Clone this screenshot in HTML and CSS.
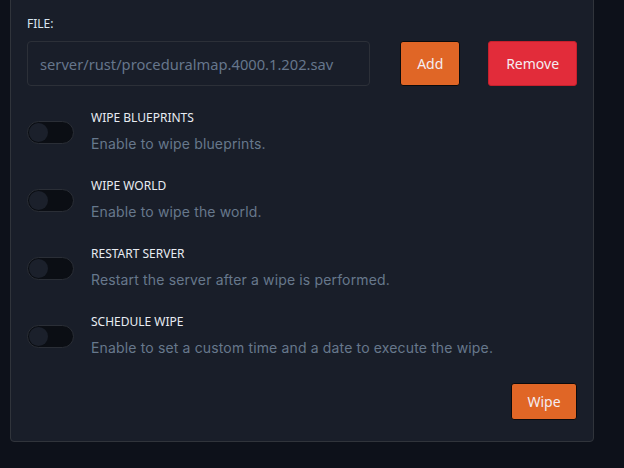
FILE: index.html
```html
<!DOCTYPE html>
<html>
<head>
<meta charset="utf-8">
<link rel="stylesheet" href="styles.css">
</head>
<body>
<div class="card">
  <div class="label">FILE:</div>
  <div class="file-row">
    <div class="input">server/rust/proceduralmap.4000.1.202.sav</div>
    <button class="btn btn-orange btn-add">Add</button>
    <button class="btn btn-red btn-remove">Remove</button>
  </div>
  <div class="options">
    <div class="option">
      <span class="toggle"><span class="knob"></span></span>
      <div class="text">
        <div class="title">WIPE BLUEPRINTS</div>
        <div class="desc">Enable to wipe blueprints.</div>
      </div>
    </div>
    <div class="option">
      <span class="toggle"><span class="knob"></span></span>
      <div class="text">
        <div class="title">WIPE WORLD</div>
        <div class="desc">Enable to wipe the world.</div>
      </div>
    </div>
    <div class="option">
      <span class="toggle"><span class="knob"></span></span>
      <div class="text">
        <div class="title">RESTART SERVER</div>
        <div class="desc">Restart the server after a wipe is performed.</div>
      </div>
    </div>
    <div class="option">
      <span class="toggle"><span class="knob"></span></span>
      <div class="text">
        <div class="title">SCHEDULE WIPE</div>
        <div class="desc">Enable to set a custom time and a date to execute the wipe.</div>
      </div>
    </div>
  </div>
  <div class="actions">
    <button class="btn btn-orange btn-wipe">Wipe</button>
  </div>
</div>
</body>
</html>
```
FILE: styles.css
```css
html, body {
  margin: 0;
  padding: 0;
  background: #0d111a;
  height: 100%;
}
body {
  font-family: "Noto Sans", "Open Sans", sans-serif;
  overflow: hidden;
}
.card {
  margin: -10px 0 0 10px;
  width: 584px;
  box-sizing: border-box;
  background: #191e29;
  border: 1px solid #30343b;
  border-radius: 4px;
  padding: 25px 16px 21px;
}
.label {
  font-size: 12px;
  line-height: 16px;
  color: #d8e6f0;
  margin-bottom: 9px;
}
.file-row {
  display: flex;
  align-items: stretch;
  height: 45px;
}
.input {
  width: 344px;
  box-sizing: border-box;
  border: 1px solid #2c3038;
  border-radius: 4px;
  padding: 0 12px;
  display: flex;
  align-items: center;
  font-size: 14.7px;
  color: #66768c;
  white-space: nowrap;
  overflow: hidden;
}
.btn {
  font-family: "Noto Sans", "Open Sans", sans-serif;
  font-size: 14px;
  color: #f4ecf2;
  border-radius: 3px;
  padding: 0;
  cursor: pointer;
}
.btn-orange {
  background: #e06626;
  border: 1px solid #0a0a0c;
}
.btn-red {
  background: #e22c3a;
  border: 1px solid #c7202c;
}
.btn-add {
  margin-left: 30px;
  width: 60px;
}
.btn-remove {
  margin-left: 28px;
  width: 89px;
}
.options {
  margin-top: 24px;
  display: flex;
  flex-direction: column;
  gap: 24px;
}
.option {
  display: flex;
  align-items: flex-start;
}
.toggle {
  position: relative;
  width: 47px;
  height: 23px;
  box-sizing: border-box;
  margin-top: 11px;
  border: 1px solid #2a2e36;
  border-radius: 12px;
  background: #0b0e14;
  flex: none;
}
.knob {
  position: absolute;
  left: 1px;
  top: 1px;
  width: 19px;
  height: 19px;
  border-radius: 50%;
  background: #1b202b;
}
.text {
  margin-left: 17px;
}
.title {
  font-size: 12px;
  line-height: 16px;
  color: #e8ecf2;
}
.desc {
  font-family: "Inter", "Roboto", sans-serif;
  font-size: 14px;
  letter-spacing: 0.15px;
  line-height: 20px;
  margin-top: 8px;
  color: #67788c;
}
.actions {
  margin-top: 25px;
  display: flex;
  justify-content: flex-end;
}
.btn-wipe {
  width: 66px;
  height: 37px;
}
```
